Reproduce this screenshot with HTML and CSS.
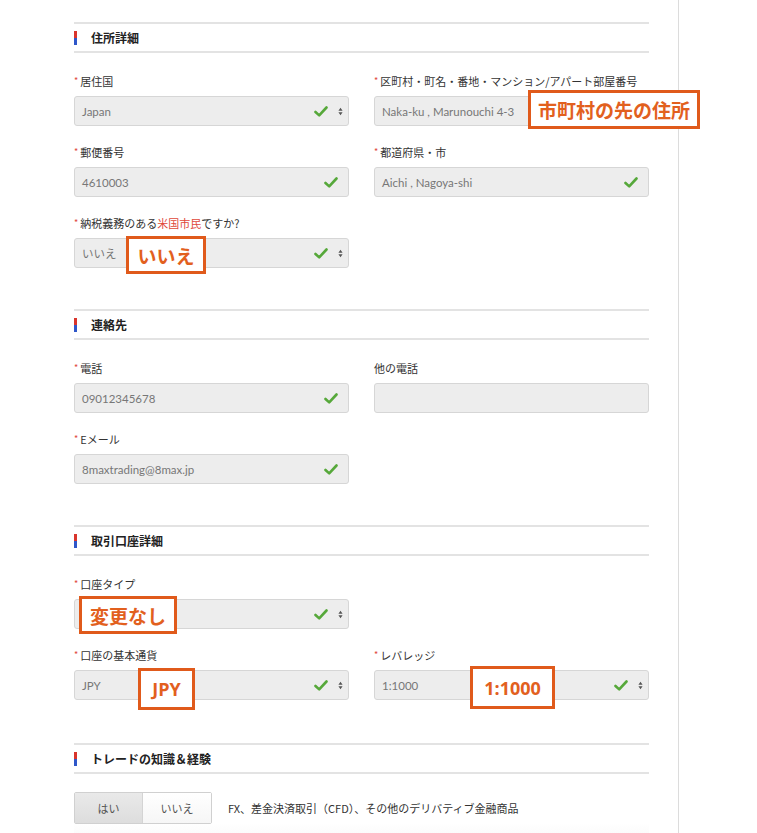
FILE: index.html
```html
<!DOCTYPE html>
<html lang="ja">
<head>
<meta charset="utf-8">
<title>口座情報</title>
<link rel="stylesheet" href="styles.css">
</head>
<body>
<div class="page">
  <section class="section first">
    <h2 class="section-head"><span class="bar"></span>住所詳細</h2>
    <div class="fields">
      <div class="field">
        <div class="label"><span class="req">*</span>居住国</div>
        <div class="input select">
          <span class="val">Japan</span>
          <span class="icons"><svg class="check" viewBox="0 0 14 11"><path d="M1.5 6 L5.2 9.4 L12.5 1.5"/></svg><svg class="arrows" viewBox="0 0 6 10"><path d="M3 0.5 L5.5 4 H0.5 Z M3 9.5 L5.5 6 H0.5 Z"/></svg></span>
        </div>
      </div>
      <div class="field">
        <div class="label"><span class="req">*</span>区町村・町名・番地・マンション/アパート部屋番号</div>
        <div class="input">
          <span class="val">Naka-ku , Marunouchi 4-3</span>
          <span class="icons"><svg class="check" viewBox="0 0 14 11"><path d="M1.5 6 L5.2 9.4 L12.5 1.5"/></svg></span>
          <span class="note note-addr">市町村の先の住所</span>
        </div>
      </div>
      <div class="field">
        <div class="label"><span class="req">*</span>郵便番号</div>
        <div class="input">
          <span class="val">4610003</span>
          <span class="icons"><svg class="check" viewBox="0 0 14 11"><path d="M1.5 6 L5.2 9.4 L12.5 1.5"/></svg></span>
        </div>
      </div>
      <div class="field">
        <div class="label"><span class="req">*</span>都道府県・市</div>
        <div class="input">
          <span class="val">Aichi , Nagoya-shi</span>
          <span class="icons"><svg class="check" viewBox="0 0 14 11"><path d="M1.5 6 L5.2 9.4 L12.5 1.5"/></svg></span>
        </div>
      </div>
      <div class="field">
        <div class="label"><span class="req">*</span>納税義務のある<span class="red">米国市民</span>ですか?</div>
        <div class="input select">
          <span class="val">いいえ</span>
          <span class="icons"><svg class="check" viewBox="0 0 14 11"><path d="M1.5 6 L5.2 9.4 L12.5 1.5"/></svg><svg class="arrows" viewBox="0 0 6 10"><path d="M3 0.5 L5.5 4 H0.5 Z M3 9.5 L5.5 6 H0.5 Z"/></svg></span>
          <span class="note note-no">いいえ</span>
        </div>
      </div>
    </div>
  </section>

  <section class="section">
    <h2 class="section-head"><span class="bar"></span>連絡先</h2>
    <div class="fields">
      <div class="field">
        <div class="label"><span class="req">*</span>電話</div>
        <div class="input">
          <span class="val">09012345678</span>
          <span class="icons"><svg class="check" viewBox="0 0 14 11"><path d="M1.5 6 L5.2 9.4 L12.5 1.5"/></svg></span>
        </div>
      </div>
      <div class="field">
        <div class="label">他の電話</div>
        <div class="input"></div>
      </div>
      <div class="field">
        <div class="label"><span class="req">*</span>Eメール</div>
        <div class="input">
          <span class="val">8maxtrading@8max.jp</span>
          <span class="icons"><svg class="check" viewBox="0 0 14 11"><path d="M1.5 6 L5.2 9.4 L12.5 1.5"/></svg></span>
        </div>
      </div>
    </div>
  </section>

  <section class="section">
    <h2 class="section-head"><span class="bar"></span>取引口座詳細</h2>
    <div class="fields">
      <div class="field">
        <div class="label"><span class="req">*</span>口座タイプ</div>
        <div class="input select">
          <span class="val"></span>
          <span class="icons"><svg class="check" viewBox="0 0 14 11"><path d="M1.5 6 L5.2 9.4 L12.5 1.5"/></svg><svg class="arrows" viewBox="0 0 6 10"><path d="M3 0.5 L5.5 4 H0.5 Z M3 9.5 L5.5 6 H0.5 Z"/></svg></span>
          <span class="note note-type">変更なし</span>
        </div>
      </div>
      <div class="field empty"></div>
      <div class="field">
        <div class="label"><span class="req">*</span>口座の基本通貨</div>
        <div class="input select">
          <span class="val">JPY</span>
          <span class="icons"><svg class="check" viewBox="0 0 14 11"><path d="M1.5 6 L5.2 9.4 L12.5 1.5"/></svg><svg class="arrows" viewBox="0 0 6 10"><path d="M3 0.5 L5.5 4 H0.5 Z M3 9.5 L5.5 6 H0.5 Z"/></svg></span>
          <span class="note note-jpy">JPY</span>
        </div>
      </div>
      <div class="field">
        <div class="label"><span class="req">*</span>レバレッジ</div>
        <div class="input select">
          <span class="val">1:1000</span>
          <span class="icons"><svg class="check" viewBox="0 0 14 11"><path d="M1.5 6 L5.2 9.4 L12.5 1.5"/></svg><svg class="arrows" viewBox="0 0 6 10"><path d="M3 0.5 L5.5 4 H0.5 Z M3 9.5 L5.5 6 H0.5 Z"/></svg></span>
          <span class="note note-lev">1:1000</span>
        </div>
      </div>
    </div>
  </section>

  <section class="section last">
    <h2 class="section-head"><span class="bar"></span>トレードの知識＆経験</h2>
    <div class="exp-row">
      <div class="toggle">
        <span class="tbtn on">はい</span>
        <span class="tbtn">いいえ</span>
      </div>
      <span class="exp-text">FX、差金決済取引（CFD）、その他のデリバティブ金融商品</span>
    </div>
  </section>
</div>
</body>
</html>
```

FILE: styles.css
```css
html, body {
  margin: 0;
  padding: 0;
  background: #ffffff;
}
body {
  font-family: "Lato", "Noto Sans CJK JP", sans-serif;
  color: #333333;
}
.page {
  box-sizing: border-box;
  width: 679px;
  min-height: 833px;
  padding: 22px 29px 0 74px;
  border-right: 1px solid #dcdcdc;
}
.section {
  margin-top: 41px;
}
.section.first {
  margin-top: 0;
}
.section.last {
  margin-top: 43px;
}
.section-head {
  box-sizing: border-box;
  height: 31px;
  margin: 0;
  border-top: 2px solid #e3e3e3;
  border-bottom: 2px solid #e3e3e3;
  display: flex;
  align-items: center;
  font-size: 12px;
  font-weight: 700;
  color: #222222;
  font-family: "Noto Sans CJK JP", sans-serif;
}
.bar {
  width: 3px;
  height: 14px;
  margin-right: 14px;
  background: linear-gradient(to bottom, #d9352c 0, #d9352c 50%, #2f57c9 50%, #2f57c9 100%);
}
.fields {
  padding-top: 20px;
  display: grid;
  grid-template-columns: 275px 275px;
  column-gap: 25px;
  row-gap: 18px;
}
.label {
  height: 16px;
  line-height: 16px;
  margin-bottom: 7px;
  font-size: 11px;
  color: #333333;
  font-family: "Noto Sans CJK JP", sans-serif;
  white-space: nowrap;
}
.req {
  color: #e0483a;
  font-size: 9px;
  margin-right: 2px;
  position: relative;
  top: -2px;
}
.red {
  color: #e0483a;
}
.input {
  position: relative;
  box-sizing: border-box;
  height: 30px;
  border: 1px solid #d6d6d6;
  border-radius: 3px;
  background: #ededed;
  display: flex;
  align-items: center;
  padding: 0 10px 0 7px;
}
.val {
  flex: 1;
  font-size: 11.5px;
  color: #777777;
  font-family: "Lato", "Noto Sans CJK JP", sans-serif;
}
.icons {
  display: flex;
  align-items: center;
  gap: 10px;
}
.check {
  width: 14px;
  height: 11px;
}
.check path {
  fill: none;
  stroke: #56a83a;
  stroke-width: 2.6;
  stroke-linecap: round;
  stroke-linejoin: round;
}
.input.select {
  padding-right: 5px;
}
.arrows {
  width: 5px;
  height: 9px;
}
.arrows path {
  fill: #555555;
}
.note {
  position: absolute;
  box-sizing: border-box;
  border: 3px solid #e05a1b;
  background: #ffffff;
  color: #e2601e;
  font-family: "Noto Sans CJK JP", sans-serif;
  font-weight: 700;
  font-size: 19px;
  display: flex;
  align-items: center;
  justify-content: center;
  white-space: nowrap;
}
.note-addr {
  left: 153px;
  top: -7px;
  width: 172px;
  height: 39px;
}
.note-no {
  left: 51px;
  top: -3px;
  width: 80px;
  height: 38px;
}
.note-type {
  left: 4px;
  top: -4px;
  width: 98px;
  height: 38px;
}
.note-jpy {
  left: 63px;
  top: -3px;
  width: 57px;
  height: 42px;
  font-family: "Open Sans", sans-serif;
  font-size: 18px;
}
.note-lev {
  left: 95px;
  top: -5px;
  width: 85px;
  height: 43px;
  font-family: "Open Sans", sans-serif;
  font-size: 18px;
}
.exp-row {
  margin-top: 18px;
  display: flex;
  align-items: center;
  gap: 16px;
  padding-bottom: 20px;
  background: linear-gradient(to bottom, #ffffff 60%, #f7f7f7);
}
.toggle {
  display: flex;
  border: 1px solid #d0d0d0;
  border-radius: 2px;
}
.tbtn {
  box-sizing: border-box;
  width: 68px;
  height: 30px;
  display: flex;
  align-items: center;
  justify-content: center;
  font-size: 11px;
  color: #555555;
  font-family: "Noto Sans CJK JP", sans-serif;
  background: linear-gradient(to bottom, #ffffff, #f6f6f6);
}
.tbtn.on {
  background: linear-gradient(to bottom, #e9e9e9, #dddddd);
  border-right: 1px solid #d4d4d4;
}
.exp-text {
  font-size: 11px;
  color: #333333;
  font-family: "Noto Sans CJK JP", sans-serif;
}
```
